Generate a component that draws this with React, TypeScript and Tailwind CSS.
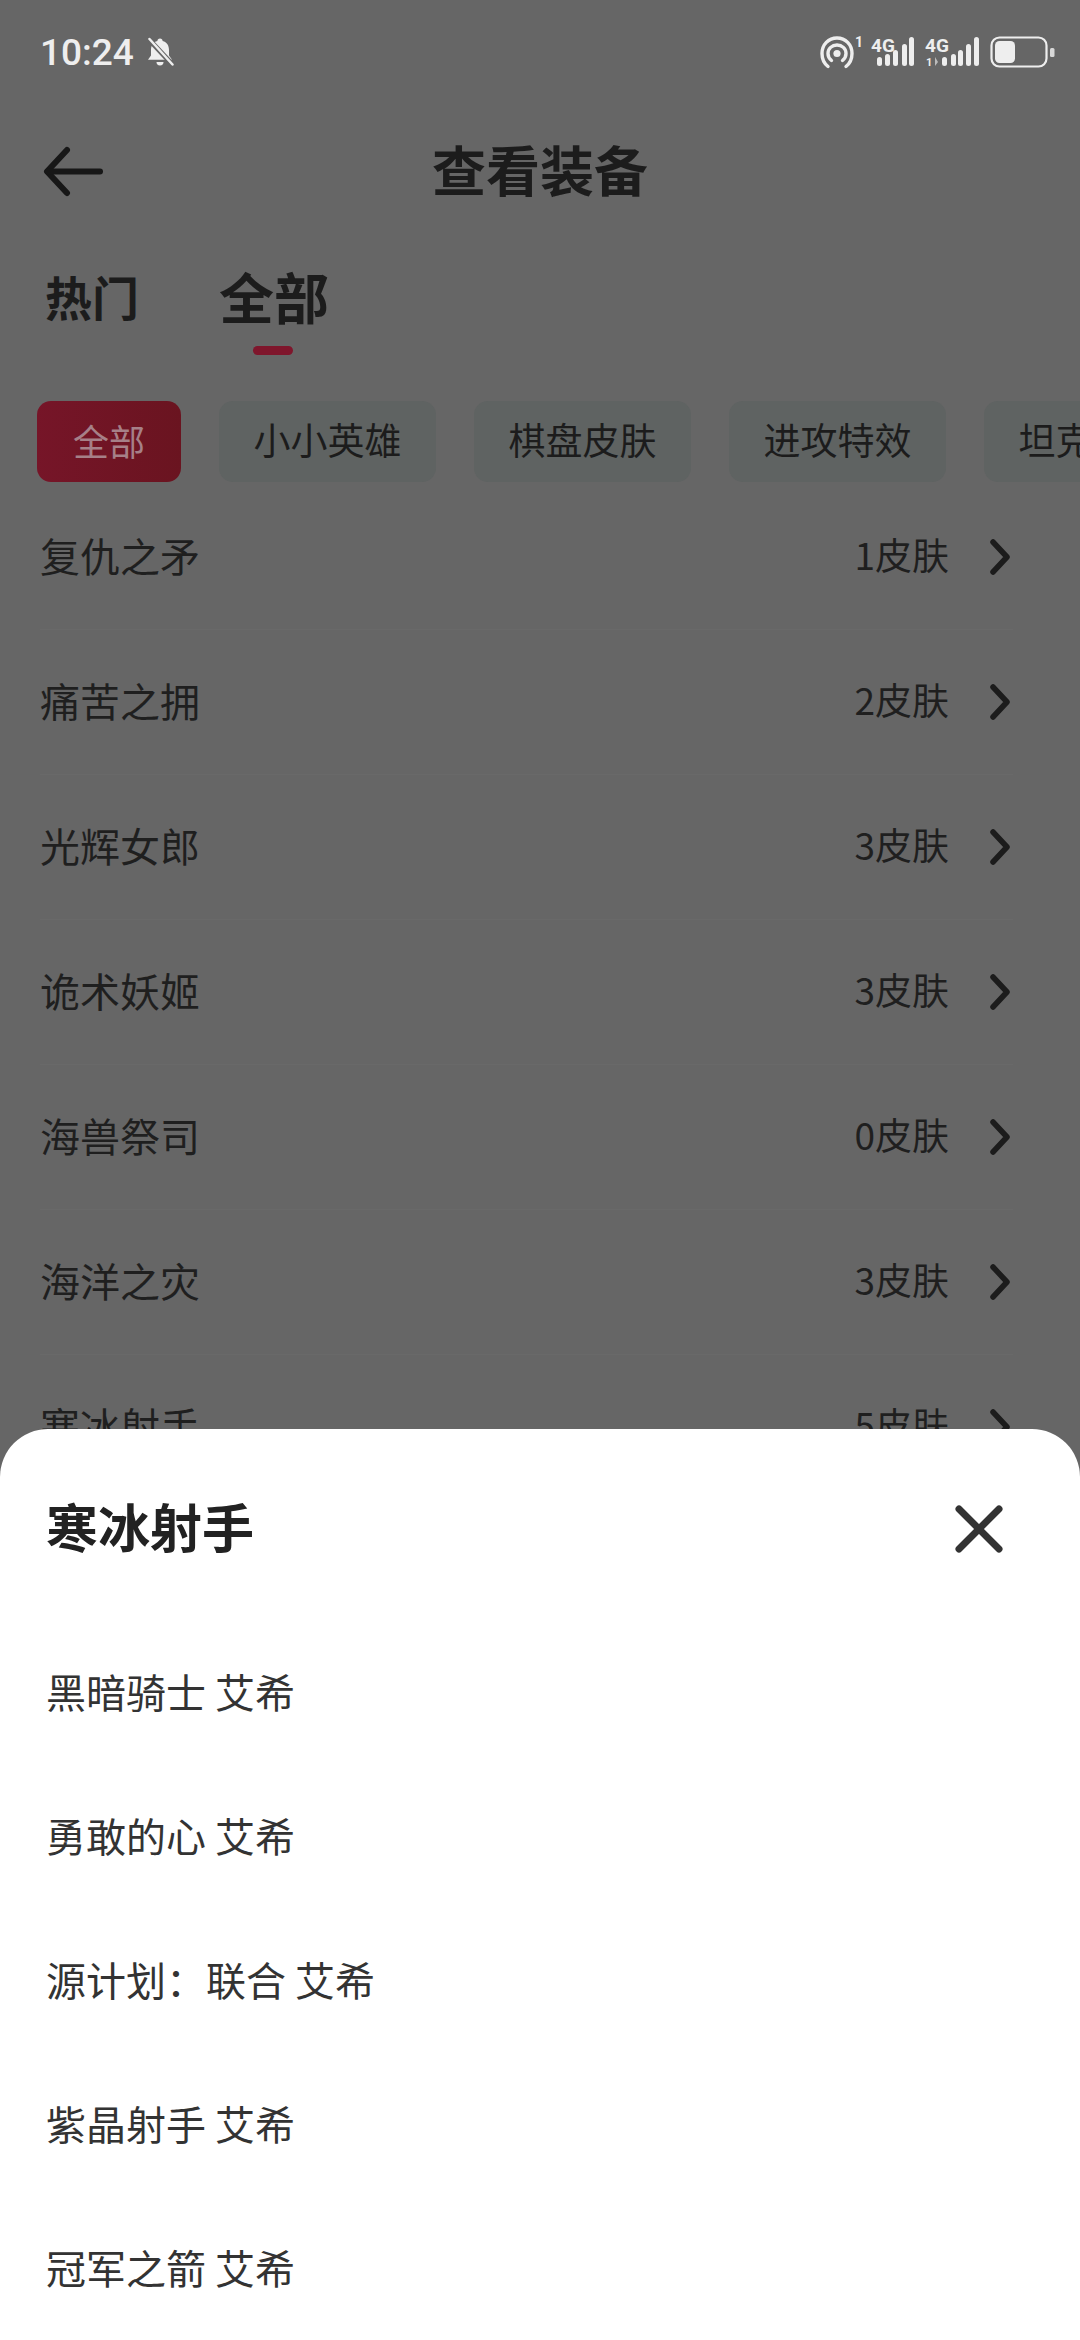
import React from "react";

function SignalOne() {
  return (
    <svg width="44" height="40" viewBox="0 -5 44 40" className="block">
      <text x="0" y="14.500" fontSize="19" fontWeight="700" fill="#eeeeee" fontFamily="Roboto, sans-serif">4G</text>
      <rect x="6" y="20" width="5" height="9" rx="2.500" fill="#eeeeee" />
      <rect x="14" y="17" width="5" height="12" rx="2.500" fill="#eeeeee" />
      <rect x="22" y="13" width="5" height="16" rx="2.500" fill="#eeeeee" />
      <rect x="31" y="7" width="5" height="22" rx="2.500" fill="#eeeeee" />
      <rect x="38" y="0" width="5" height="29" rx="2.500" fill="#eeeeee" />
    </svg>
  );
}

function SignalTwo() {
  return (
    <svg width="55" height="40" viewBox="0 -5 55 40" className="block">
      <text x="0" y="14.500" fontSize="19" fontWeight="700" fill="#eeeeee" fontFamily="Roboto, sans-serif">4G</text>
      <text x="1" y="29" fontSize="11" fontWeight="700" fill="#eeeeee" fontFamily="Roboto, sans-serif">1</text>
      <path d="M10 20v9l3-4z" fill="#bbbbbb" />
      <rect x="17" y="20" width="5" height="9" rx="2.500" fill="#eeeeee" />
      <rect x="26" y="17" width="5" height="12" rx="2.500" fill="#eeeeee" />
      <rect x="33" y="13" width="5" height="16" rx="2.500" fill="#eeeeee" />
      <rect x="41" y="7" width="5" height="22" rx="2.500" fill="#eeeeee" />
      <rect x="49" y="0" width="5" height="29" rx="2.500" fill="#eeeeee" />
    </svg>
  );
}

function StatusBar() {
  return (
    <div className="h-[104px] flex items-center justify-between pl-[40px] pr-[24px]">
      <div className="flex items-center gap-[12px]">
        <span className="font-['Roboto',sans-serif] font-medium text-[37px] leading-none text-[#eeeeee]">10:24</span>
        <svg width="28" height="30" viewBox="0 0 28 30">
          <path d="M14 1.500c1.600 0 2.600 1.100 2.600 2.400 4.400 1.100 6.400 4.600 6.400 9v5.600l3 4.200H2l3-4.200V12.900c0-4.400 2-7.800 6.400-9C11.400 2.600 12.400 1.500 14 1.500z" fill="#eeeeee" />
          <path d="M10.500 25h7a3.500 3.500 0 0 1-7 0z" fill="#eeeeee" />
          <path d="M3 2.500L26 27" stroke="#666666" strokeWidth="5" />
          <path d="M3.500 2L26.500 27.500" stroke="#eeeeee" strokeWidth="2.500" strokeLinecap="round" />
        </svg>
      </div>
      <div className="flex items-center">
        <svg width="44" height="40" viewBox="0 -3 44 40">
          <path d="M8 31.500C3.500 28 2 24 2 18.500 2 9.500 8.500 3 17 3s15 6.500 15 15.500c0 5.500-1.500 9.500-6 13" fill="none" stroke="#eeeeee" strokeWidth="3.400" strokeLinecap="round" />
          <path d="M11.500 25.500C9 23.500 8 21 8 18.500 8 13.500 12 10 17 10s9 3.500 9 8.500c0 2.500-1 5-3.500 7" fill="none" stroke="#eeeeee" strokeWidth="3.400" strokeLinecap="round" />
          <circle cx="17" cy="18.500" r="3.600" fill="#eeeeee" />
          <text x="35" y="12" fontSize="14" fontWeight="700" fill="#eeeeee" fontFamily="Roboto, sans-serif">1</text>
        </svg>
        <div className="ml-[7px]">
          <SignalOne />
        </div>
        <div className="ml-[10px]">
          <SignalTwo />
        </div>
        <svg width="66" height="32" viewBox="0 0 66 32" className="ml-[10px]">
          <rect x="1.500" y="1.500" width="55" height="29" rx="8" fill="none" stroke="#eeeeee" strokeWidth="2.200" />
          <rect x="5" y="5" width="20" height="22" rx="4.500" fill="#eeeeee" />
          <rect x="60" y="12" width="4.500" height="9" rx="1.500" fill="#d8d8d8" />
        </svg>
      </div>
    </div>
  );
}

const rows: [string, string][] = [
  ["复仇之矛", "1皮肤"],
  ["痛苦之拥", "2皮肤"],
  ["光辉女郎", "3皮肤"],
  ["诡术妖姬", "3皮肤"],
  ["海兽祭司", "0皮肤"],
  ["海洋之灾", "3皮肤"],
  ["寒冰射手", "5皮肤"],
];

const chips = ["小小英雄", "棋盘皮肤", "进攻特效", "坦克特效"];

const skins = ["黑暗骑士 艾希", "勇敢的心 艾希", "源计划：联合 艾希", "紫晶射手 艾希", "冠军之箭 艾希"];

export default function App() {
  return (
    <div className="relative w-[1080px] h-[2340px] overflow-hidden bg-[#666666] font-['Noto_Sans_CJK_SC',sans-serif] text-[#1c1c1c]">
      <StatusBar />

      <div className="relative h-[136px] flex items-center justify-center">
        <svg width="64" height="52" viewBox="0 0 64 52" className="absolute left-[42px] top-[42px]">
          <path d="M25 4L5 25.500 25 47" fill="none" stroke="#171717" strokeWidth="6" strokeLinecap="round" strokeLinejoin="round" />
          <path d="M6 25.500H58" fill="none" stroke="#171717" strokeWidth="6" strokeLinecap="round" />
        </svg>
        <h1 className="mb-[6px] text-[54px] font-bold leading-none text-[#1c1c1c]">查看装备</h1>
      </div>

      <div className="flex items-start gap-[84px] pl-[45px] pt-[28px] font-bold">
        <div className="h-[60px] pb-[6px] flex items-center text-[47px] leading-none">热门</div>
        <div className="flex flex-col items-center">
          <div className="h-[60px] pb-[6px] -ml-[4px] flex items-center text-[55px] leading-none">全部</div>
          <div className="mt-[18px] -ml-[6px] w-[40px] h-[9px] rounded-full bg-[#7f162c]" />
        </div>
      </div>

      <div className="mt-[46px] pl-[37px] flex gap-[38px] overflow-hidden">
        <div className="shrink-0 h-[81px] w-[144px] pb-[4px] rounded-[14px] bg-gradient-to-r from-[#761528] to-[#6a1420] flex items-center justify-center text-[36px] text-[#a68088]">
          全部
        </div>
        {chips.map((c) => (
          <div key={c} className="shrink-0 h-[81px] w-[217px] pb-[4px] rounded-[14px] bg-[#5f6362] flex items-center justify-center text-[37px] text-[#1c1c1c] whitespace-nowrap">
            {c}
          </div>
        ))}
      </div>

      <div className="mt-[3px] pl-[40px] pr-[67px]">
        {rows.map(([name, count]) => (
          <div key={name} className="h-[145px] flex items-center justify-between border-b border-[#696969] text-[#1f1f1f]">
            <span className="mb-[5px] text-[40px]">{name}</span>
            <span className="flex items-center gap-[40px]">
              <span className="mb-[5px] text-[37px]">{count}</span>
              <svg width="24" height="36" viewBox="0 0 24 36">
                <path d="M4 3L18 18 4 33" fill="none" stroke="#1c1c1c" strokeWidth="5.500" strokeLinecap="round" strokeLinejoin="round" />
              </svg>
            </span>
          </div>
        ))}
      </div>

      <div className="absolute left-0 right-0 bottom-0 h-[911px] bg-white rounded-t-[48px] pl-[46px] pr-[47px]">
        <div className="h-[190px] pt-[4px] flex items-center justify-between pr-[30px]">
          <h2 className="text-[52px] font-bold leading-none text-[#222222]">寒冰射手</h2>
          <svg width="48" height="48" viewBox="0 0 48 48" className="mt-[5px]">
            <path d="M4 4L44 44M44 4L4 44" fill="none" stroke="#333333" strokeWidth="7" strokeLinecap="round" />
          </svg>
        </div>
        <div className="flex flex-col">
          {skins.map((s) => (
            <div key={s} className="h-[144px] flex items-center text-[40px] text-[#333333] whitespace-pre">
              {s}
            </div>
          ))}
        </div>
      </div>
    </div>
  );
}
